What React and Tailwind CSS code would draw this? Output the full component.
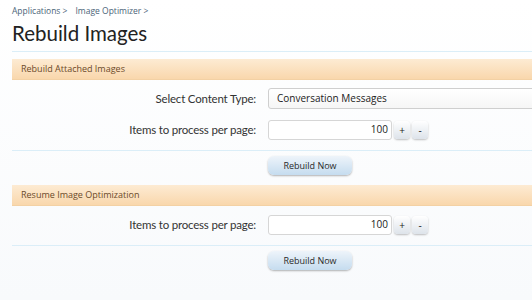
export default function App() {
  const font = { fontFamily: '"Open Sans", "Liberation Sans", sans-serif' };
  const Header = ({ children }) => (
    <div className="ml-3 h-[21px] flex items-center pl-[9px] text-[9px] text-[#6b4a2a] bg-gradient-to-b from-[#fdebd3] to-[#f9d7ac] border-b border-[#f3d1a4]">
      {children}
    </div>
  );
  const Stepper = ({ value }) => (
    <div className="flex items-center gap-[2px]">
      <div className="w-[124px] h-[20px] border border-[#d6d6d6] rounded-[3px] bg-white flex items-center justify-end pr-[3px] text-[10px] text-[#222]">{value}</div>
      <button className="w-[16px] h-[18px] rounded-[4px] text-[10px] text-[#222] bg-gradient-to-b from-white to-[#dde3ea] shadow-[0_1px_2px_rgba(0,0,0,0.25)] flex items-center justify-center leading-none">+</button>
      <button className="w-[16px] h-[18px] rounded-[4px] text-[10px] text-[#222] bg-gradient-to-b from-white to-[#dde3ea] shadow-[0_1px_2px_rgba(0,0,0,0.25)] flex items-center justify-center leading-none">-</button>
    </div>
  );
  const Button = () => (
    <div className="ml-[268px] mt-[5px]">
      <button className="w-[84px] h-[19px] rounded-[6px] text-[9px] text-[#2a2a2a] bg-gradient-to-b from-[#eef4fa] to-[#c5dcef] shadow-[0_1px_2px_rgba(0,0,0,0.3)] flex items-center justify-center">Rebuild Now</button>
    </div>
  );
  const Row = ({ label, children, className = "" }) => (
    <div className={"flex items-center " + className}>
      <div className="w-[256px] text-right text-[#333] tracking-[-0.2px]" style={{ fontFamily: 'Lato, "Open Sans", sans-serif', fontSize: "11.5px" }}>{label}</div>
      <div className="ml-[12px] flex-1 min-w-0">{children}</div>
    </div>
  );
  return (
    <div className="w-[532px] h-[300px] overflow-hidden bg-gradient-to-b from-white to-[#f8fafc]" style={font}>
      <div className="pl-3 pt-[5px] text-[8.5px] text-[#4b6478] flex gap-[8px]">
        <span>Applications &gt;</span>
        <span>Image Optimizer &gt;</span>
      </div>
      <div className="pl-3 mt-[2px] text-[20.5px] leading-[26px] text-[#222]" style={{ fontFamily: 'Lato, "Open Sans", sans-serif' }}>Rebuild Images</div>
      <div className="ml-3 mt-[5px] border-t border-[#dbeef8]"></div>
      <div className="mt-[7px]">
        <Header>Rebuild Attached Images</Header>
      </div>
      <Row label="Select Content Type:" className="mt-[8px]">
        <div className="w-[300px] h-[21px] border border-[#cfcfcf] rounded-[3px] bg-gradient-to-b from-white to-[#f6f6f6] flex items-center pl-[8px] text-[10px] text-[#222]">Conversation Messages</div>
      </Row>
      <Row label="Items to process per page:" className="mt-[11px]">
        <Stepper value="100" />
      </Row>
      <div className="ml-3 mt-[10px] border-t border-[#dbeef8]"></div>
      <Button />
      <div className="mt-[10px]">
        <Header>Resume Image Optimization</Header>
      </div>
      <Row label="Items to process per page:" className="mt-[9px]">
        <Stepper value="100" />
      </Row>
      <div className="ml-3 mt-[10px] border-t border-[#dbeef8]"></div>
      <Button />
    </div>
  );
}
